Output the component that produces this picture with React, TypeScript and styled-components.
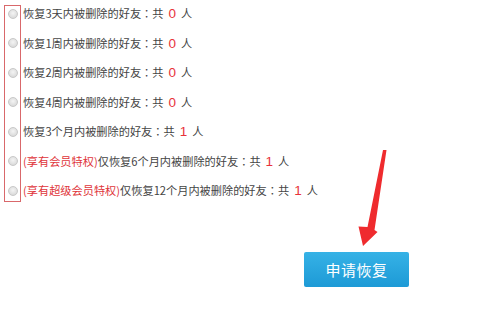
import React from "react";
import styled, { createGlobalStyle } from "styled-components";

const GlobalStyle = createGlobalStyle`
  html, body {
    margin: 0;
    padding: 0;
    background: #ffffff;
  }
`;

type Option = {
  perk?: string;
  text: string;
  count: number;
};

const options: Option[] = [
  { text: "恢复3天内被删除的好友", count: 0 },
  { text: "恢复1周内被删除的好友", count: 0 },
  { text: "恢复2周内被删除的好友", count: 0 },
  { text: "恢复4周内被删除的好友", count: 0 },
  { text: "恢复3个月内被删除的好友", count: 1 },
  { perk: "(享有会员特权)", text: "仅恢复6个月内被删除的好友", count: 1 },
  { perk: "(享有超级会员特权)", text: "仅恢复12个月内被删除的好友", count: 1 },
];

const App = () => {
  return (
    <Page>
      <GlobalStyle />
      <List>
        {options.map((o, i) => (
          <Row key={i}>
            <Radio type="radio" name="range" />
            <Label>
              {o.perk && <Perk>{o.perk}</Perk>}
              {o.text}
              <Colon>：</Colon>共<Count>{o.count}</Count>人
            </Label>
          </Row>
        ))}
        {/* 标注框 */}
        <Highlight />
      </List>

      <Actions>
        <SubmitButton>申请恢复</SubmitButton>
      </Actions>

      {/* 标注箭头 */}
      <Arrow width="45" height="105" viewBox="0 0 45 105">
        <polygon
          points="33,5 36.5,5 24.5,85 27.5,87 13,101 8.5,81.5 17.5,82"
          fill="#ef2b2e"
        />
      </Arrow>
    </Page>
  );
};

const Page = styled.div`
  position: relative;
  width: 500px;
  height: 327px;
  overflow: hidden;
  font-family: "Microsoft YaHei", "Noto Sans CJK SC", "Liberation Sans", sans-serif;
  color: #333;
`;

const List = styled.div`
  position: relative;
  display: flex;
  flex-direction: column;
  margin-top: -1px;
`;

const Row = styled.label`
  display: flex;
  align-items: center;
  height: 29.5px;
  padding-left: 8px;
`;

const Radio = styled.input`
  appearance: none;
  margin: 0 5px 0 0;
  width: 10px;
  height: 10px;
  border-radius: 50%;
  border: 1px solid #c8c8c8;
  background: radial-gradient(circle at 50% 40%, #f4f4f4 0%, #dcdcdc 70%, #cfcfcf 100%);
  box-sizing: border-box;
`;

const Label = styled.span`
  font-size: 11.2px;
  line-height: 1;
  color: #444;
  white-space: nowrap;
`;

const Colon = styled.span`
  font-family: "Noto Sans CJK TC", "Noto Sans CJK SC", sans-serif;
`;

const Perk = styled.span`
  color: #e0353a;
`;

const Count = styled.span`
  color: #e8323a;
  font-size: 13.5px;
  margin: 0 5px;
  font-family: "Liberation Sans", sans-serif;
`;

const Highlight = styled.div`
  position: absolute;
  left: 4px;
  top: 6px;
  width: 17px;
  height: 197px;
  border: 1px solid #d9686b;
  box-sizing: border-box;
  pointer-events: none;
`;

const Actions = styled.div`
  display: flex;
  padding-left: 304px;
  margin-top: 46px;
`;

const SubmitButton = styled.button`
  width: 105px;
  height: 35px;
  border: none;
  border-radius: 2px;
  background: linear-gradient(#36b2e6, #1d9ad6);
  color: #fff;
  font-family: "Microsoft YaHei", "Noto Sans CJK SC", sans-serif;
  font-size: 15px;
  letter-spacing: 0.5px;
  cursor: pointer;
`;

const Arrow = styled.svg`
  position: absolute;
  left: 350px;
  top: 145px;
`;

export default App;
